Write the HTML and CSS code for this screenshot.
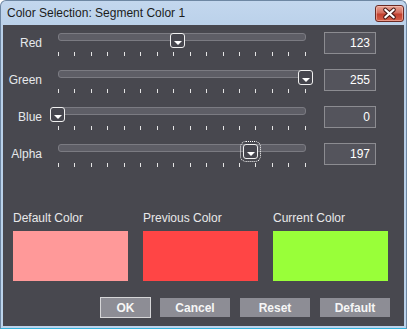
FILE: index.html
```html
<!DOCTYPE html>
<html lang="en">
  <head>
    <meta charset="UTF-8">
    <title>Color Selection</title>
    <link rel="stylesheet" href="styles.css">
  </head>
  <body>
    <div class="window">

      <div class="titlebar">
        <span class="title">Color Selection: Segment Color 1</span>
        <button class="close" aria-label="Close">
          <svg width="29" height="17" viewBox="0 0 29 17">
            <path d="M10 4.5 L19 12.5 M19 4.5 L10 12.5" stroke="#4a1a16" stroke-width="4.6" stroke-linecap="round"/>
            <path d="M10 4.5 L19 12.5 M19 4.5 L10 12.5" stroke="#ffffff" stroke-width="2.4" stroke-linecap="round"/>
          </svg>
        </button>
      </div>

      <div class="client">

        <div class="channels">
          <div class="channel">
            <span class="label">Red</span>
            <div class="slider">
              <div class="track"></div>
              <div class="ticks"><i></i><i></i><i></i><i></i><i></i><i></i><i></i><i></i><i></i><i></i><i></i><i></i><i></i><i></i><i></i><i></i></div>
              <span class="thumb" style="left: 112px"></span>
            </div>
            <span class="value">123</span>
          </div>

          <div class="channel">
            <span class="label">Green</span>
            <div class="slider">
              <div class="track"></div>
              <div class="ticks"><i></i><i></i><i></i><i></i><i></i><i></i><i></i><i></i><i></i><i></i><i></i><i></i><i></i><i></i><i></i><i></i></div>
              <span class="thumb" style="left: 240px"></span>
            </div>
            <span class="value">255</span>
          </div>

          <div class="channel">
            <span class="label">Blue</span>
            <div class="slider">
              <div class="track"></div>
              <div class="ticks"><i></i><i></i><i></i><i></i><i></i><i></i><i></i><i></i><i></i><i></i><i></i><i></i><i></i><i></i><i></i><i></i></div>
              <span class="thumb" style="left: -8px"></span>
            </div>
            <span class="value">0</span>
          </div>

          <div class="channel">
            <span class="label">Alpha</span>
            <div class="slider">
              <div class="track"></div>
              <div class="ticks"><i></i><i></i><i></i><i></i><i></i><i></i><i></i><i></i><i></i><i></i><i></i><i></i><i></i><i></i><i></i><i></i></div>
              <span class="thumb focused" style="left: 185px"></span>
            </div>
            <span class="value">197</span>
          </div>
        </div>

        <div class="swatches">
          <div class="swatch">
            <div class="swatch-label">Default Color</div>
            <div class="chip default"></div>
          </div>
          <div class="swatch">
            <div class="swatch-label">Previous Color</div>
            <div class="chip previous"></div>
          </div>
          <div class="swatch">
            <div class="swatch-label">Current Color</div>
            <div class="chip current"></div>
          </div>
        </div>

        <div class="actions">
          <button class="btn ok">OK</button>
          <button class="btn">Cancel</button>
          <button class="btn">Reset</button>
          <button class="btn">Default</button>
        </div>

      </div>
    </div>
  </body>
</html>
```

FILE: styles.css
```css
html, body {
  margin: 0;
  padding: 0;
  background: #ffffff;
}

.window {
  width: 407px;
  height: 329px;
  box-sizing: border-box;
  border: 1px solid #6e87a3;
  border-bottom-color: #35b2dc;
  border-radius: 6px 6px 0 0;
  background: linear-gradient(#c3d7ee, #b9d0e9 30px, #bcd4ec);
  padding: 0 2px 2px 2px;
  font-family: "Liberation Sans", Arial, sans-serif;
  font-size: 12px;
}

/* title bar */

.titlebar {
  height: 24px;
  display: flex;
  justify-content: space-between;
  align-items: flex-start;
}

.title {
  line-height: 24px;
  padding-left: 4px;
  color: #1b1b1b;
}

.close {
  margin: 4px 0 0 0;
  width: 29px;
  height: 17px;
  padding: 0;
  border: 1px solid #6b2a24;
  border-radius: 3px;
  background: linear-gradient(#e8a596, #d46e5f 45%, #c2402f 55%, #d5604a);
  box-shadow: inset 0 0 0 1px rgba(255, 210, 200, 0.5);
  display: flex;
  align-items: center;
  justify-content: center;
}

.close svg {
  display: block;
}

/* client area */

.client {
  height: 301px;
  background: #48484f;
  padding-top: 7px;
  box-sizing: border-box;
}

.channel {
  display: flex;
  align-items: flex-start;
  height: 37px;
}

.label {
  width: 39px;
  text-align: right;
  line-height: 22px;
  color: #e6e8ec;
}

.slider {
  position: relative;
  width: 248px;
  margin-left: 16px;
  margin-top: 1px;
}

.track {
  height: 8px;
  box-sizing: border-box;
  border: 1px solid #7b7b82;
  border-radius: 3px;
  background: #5e5e66;
}

.ticks {
  display: flex;
  justify-content: space-between;
  margin-top: 11px;
  height: 4px;
}

.ticks i {
  width: 1px;
  height: 4px;
  background: #e4e4e4;
}

.thumb {
  position: absolute;
  top: 0;
  width: 15px;
  height: 15px;
  box-sizing: border-box;
  border: 1px solid #f0f0f0;
  border-radius: 3px;
  background: #46464e;
}

.thumb::after {
  content: "";
  position: absolute;
  left: 3px;
  top: 7px;
  border-left: 4px solid transparent;
  border-right: 4px solid transparent;
  border-top: 4px solid #ffffff;
}

.thumb.focused {
  outline: 1px dotted #ffffff;
  outline-offset: 2px;
}

.value {
  margin-left: 18px;
  width: 52px;
  height: 22px;
  box-sizing: border-box;
  border: 1px solid #8c8c91;
  background: #54545c;
  color: #ffffff;
  text-align: right;
  padding-right: 5px;
  line-height: 20px;
}

/* colour swatches */

.swatches {
  display: flex;
  gap: 15px;
  padding-left: 10px;
  margin-top: 30px;
}

.swatch {
  width: 115px;
}

.swatch-label {
  line-height: 16px;
  color: #e8e8ea;
  margin-bottom: 5px;
}

.chip {
  height: 50px;
}

.chip.default {
  background: #ff9999;
}

.chip.previous {
  background: #ff4545;
}

.chip.current {
  background: #99ff39;
}

/* buttons */

.actions {
  display: flex;
  justify-content: flex-end;
  align-items: center;
  gap: 10px;
  padding-right: 14px;
  margin-top: 16px;
  height: 21px;
}

.btn {
  width: 70px;
  height: 19px;
  padding: 0;
  border: none;
  background: #8d8d95;
  color: #f6f6f6;
  font-family: "Liberation Sans", Arial, sans-serif;
  font-weight: bold;
  font-size: 12px;
}

.btn.ok {
  width: 51px;
  height: 21px;
  border: 1px solid #d6d6d8;
  margin-right: -1px;
}
```
